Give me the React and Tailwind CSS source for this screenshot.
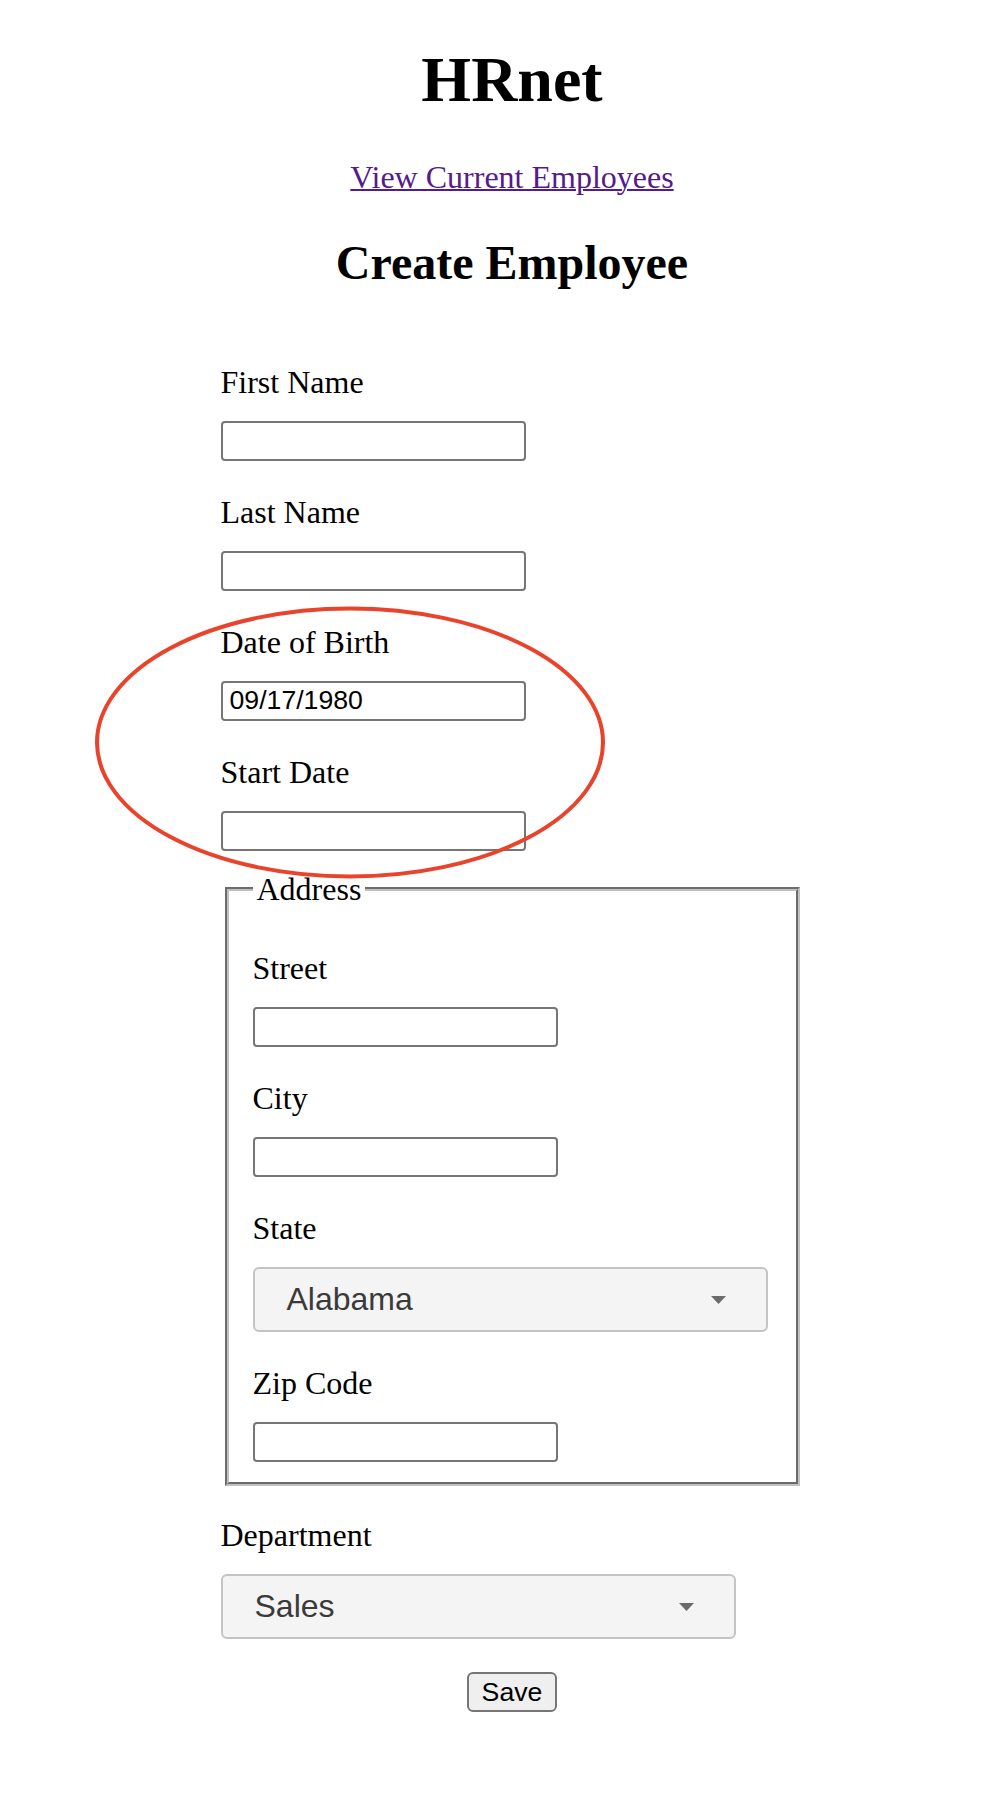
import React from "react";

function Label({ children, top = "mt-[32px]" }) {
  return (
    <label className={`block ${top} mb-[20px] text-[32px] leading-[38px] text-black`}>
      {children}
    </label>
  );
}

function TextInput({ value = "" }) {
  return (
    <input
      type="text"
      defaultValue={value}
      className="block w-[305px] h-[40px] border-2 border-[#767676] rounded-[4px] bg-white px-[7px] text-[26.67px] leading-[30px] text-black font-['Liberation_Sans',Arial,sans-serif] outline-none"
    />
  );
}

function FakeSelect({ value }) {
  return (
    <div className="flex items-center justify-between w-[515px] h-[65px] bg-[#f4f4f4] border-2 border-[#c4c4c4] rounded-[6px] pl-[32px] pr-[40px]">
      <span className="text-[32px] leading-[37px] text-[#3a3a3a] font-['Liberation_Sans',Arial,sans-serif]">
        {value}
      </span>
      <svg width="15" height="8" viewBox="0 0 15 8" className="block">
        <path d="M0 0 L15 0 L7.5 8 Z" fill="#6b6b6b" />
      </svg>
    </div>
  );
}

export default function App() {
  return (
    <div className="relative min-h-screen bg-white pl-[30px] text-black font-['Liberation_Serif','Times_New_Roman',serif]">
      <div className="flex flex-col items-center pt-[43px] pb-[95px]">
        <h1 className="text-[64px] font-bold leading-[73.5px]">HRnet</h1>
        <a
          href="#"
          className="mt-[42px] text-[32px] leading-[36.8px] text-[#551a8b] underline decoration-2"
        >
          View Current Employees
        </a>
        <h2 className="mt-[40px] text-[48px] font-bold leading-[55.2px]">
          Create Employee
        </h2>
        <form className="mt-[40px] flex flex-col items-start">
          <Label>First Name</Label>
          <TextInput />
          <Label>Last Name</Label>
          <TextInput />
          <Label>Date of Birth</Label>
          <TextInput value="09/17/1980" />
          <Label>Start Date</Label>
          <TextInput />

          <fieldset className="mx-[4px] mt-[20px] w-[575px] border-[4px] [border-style:groove] border-[#c0c0c0] px-[24px] pt-[10px] pb-[20px]">
            <legend className="px-[4px] text-[32px] leading-[36.8px]">Address</legend>
            <Label>Street</Label>
            <TextInput />
            <Label>City</Label>
            <TextInput />
            <Label>State</Label>
            <FakeSelect value="Alabama" />
            <Label>Zip Code</Label>
            <TextInput />
          </fieldset>

          <Label top="mt-[30px]">Department</Label>
          <FakeSelect value="Sales" />
        </form>
        <button
          type="button"
          className="mt-[33px] h-[40px] px-[13px] border-2 border-[#767676] rounded-[6px] bg-[#efefef] text-[26.67px] leading-[30px] text-black font-['Liberation_Sans',Arial,sans-serif]"
        >
          Save
        </button>
      </div>

      <svg
        className="absolute left-0 top-0 pointer-events-none"
        width="994"
        height="1000"
        viewBox="0 0 994 1000"
      >
        <ellipse
          cx="350"
          cy="742.5"
          rx="253"
          ry="134"
          fill="none"
          stroke="#e9432c"
          strokeWidth="4"
        />
      </svg>
    </div>
  );
}
